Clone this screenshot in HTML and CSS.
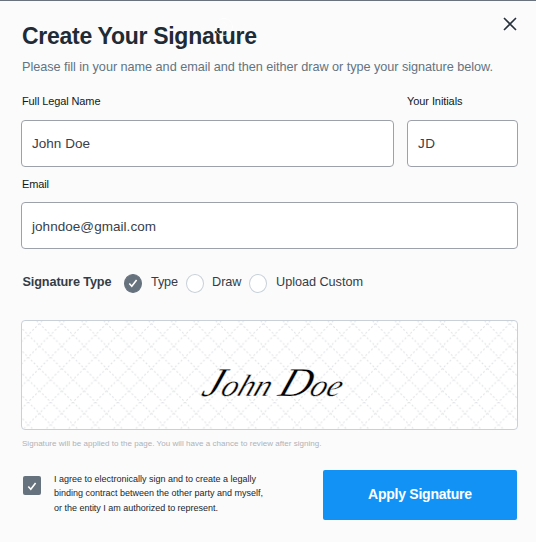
FILE: index.html
```html
<!DOCTYPE html>
<html lang="en">
<head>
<meta charset="utf-8">
<title>Create Your Signature</title>
<link rel="stylesheet" href="styles.css">
</head>
<body>
<main class="dialog">
  <header class="header">
    <h1 class="title"><svg class="t" viewBox="0 0 240 28"><text x="0" y="22" textLength="235">Create Your Signature</text></svg>
      <svg class="help" viewBox="0 0 20 20"><circle cx="10" cy="10" r="8.5"/><path d="M7.5 8a2.500 2.500 0 1 1 3.700 2.200c-.8.5-1.200.8-1.200 1.800M10 14v1"/></svg>
    </h1>
    <svg class="close" viewBox="0 0 14 14"><path d="M1 1l12 12M13 1L1 13"/></svg>
  </header>
  <p class="intro"><svg class="t" viewBox="0 0 480 20"><text x="0" y="14" textLength="471">Please fill in your name and email and then either draw or type your signature below.</text></svg></p>
  <div class="row">
    <label class="field name"><span class="label"><svg class="t" viewBox="0 0 100 15"><text x="0" y="10" textLength="78.500">Full Legal Name</text></svg></span>
      <span class="input"><svg class="t" viewBox="0 0 100 20"><text x="0" y="14" textLength="58">John Doe</text></svg></span></label>
    <label class="field initials"><span class="label"><svg class="t" viewBox="0 0 100 15"><text x="0" y="10" textLength="55.500">Your Initials</text></svg></span>
      <span class="input"><svg class="t" viewBox="0 0 90 20"><text x="0" y="14" textLength="17">JD</text></svg></span></label>
  </div>
  <label class="field email"><span class="label"><svg class="t" viewBox="0 0 100 15"><text x="0" y="11" textLength="27">Email</text></svg></span>
    <span class="input"><svg class="t" viewBox="0 0 200 20"><text x="0" y="15" textLength="124">johndoe@gmail.com</text></svg></span></label>
  <div class="types">
    <svg class="t legend" viewBox="0 0 102 20"><text x="0.500" y="14" textLength="89">Signature Type</text></svg>
    <span class="radio checked"><svg class="tick" viewBox="0 0 10 10"><path d="M1.300 5.500l2.500 2.700L8.600 2"/></svg></span>
    <svg class="t type" viewBox="0 0 35 20"><text x="0" y="14" textLength="27">Type</text></svg>
    <span class="radio"></span>
    <svg class="t draw" viewBox="0 0 37 20"><text x="0" y="14" textLength="29.500">Draw</text></svg>
    <span class="radio"></span>
    <svg class="t upload" viewBox="0 0 100 20"><text x="0" y="14" textLength="87">Upload Custom</text></svg>
  </div>
  <div class="pad">
    <svg class="canvas" viewBox="0 0 495 108">
      <defs><pattern id="lattice" x="6.200" y="-8.600" width="22.400" height="22.400" patternUnits="userSpaceOnUse"><path d="M0 0L22.400 22.400M22.400 0L0 22.400"/></pattern></defs>
      <rect width="495" height="108" fill="url(#lattice)"/>
      <text class="signature" transform="translate(178 75) skewX(-20)" x="0" y="0" textLength="139" lengthAdjust="spacingAndGlyphs"><tspan class="cap">J</tspan>ohn <tspan class="cap">D</tspan>oe</text>
    </svg>
  </div>
  <p class="note"><svg class="t" viewBox="0 0 320 12"><text x="0" y="9" textLength="299.500">Signature will be applied to the page. You will have a chance to review after signing.</text></svg></p>
  <footer class="footer">
    <span class="checkbox"><svg class="tick" viewBox="0 0 10 10"><path d="M1.300 5.500l2.500 2.700L8.600 2"/></svg></span>
    <svg class="t consent" viewBox="0 0 220 46"><text x="0" y="12" textLength="202">I agree to electronically sign and to create a legally</text><text x="0" y="26" textLength="209">binding contract between the other party and myself,</text><text x="0" y="41" textLength="164">or the entity I am authorized to represent.</text></svg>
    <button class="apply" type="button"><svg class="t" viewBox="0 0 104 20"><text x="0" y="14" textLength="104">Apply Signature</text></svg></button>
  </footer>
</main>
</body>
</html>
```
FILE: styles.css
```css
* { box-sizing: border-box; }
body { margin: 0; background: #fbfbfc; font-family: "Liberation Sans", Arial, sans-serif; color: #212b36; }
.dialog { height: 542px; border-top: 1px solid #69727d; padding: 21px 18px 0 21px; overflow: hidden; }
.t { display: block; overflow: visible; fill: currentColor; flex: none; }
.header { display: flex; justify-content: space-between; height: 37px; }
.title { position: relative; margin: 0 0 0 1px; font-size: 23px; font-weight: 700; color: #212b36; }
.title .t { width: 240px; height: 28px; }
.help { position: absolute; left: 192px; top: -5px; width: 20px; height: 20px; fill: none; stroke: #fff; stroke-width: 1; opacity: 0.75; }
.close { width: 14px; height: 14px; margin: -5px 1px 0 0; fill: none; stroke: #27313c; stroke-width: 1.6; }
.intro { margin: -2px 0 0 1px; height: 37px; padding-top: 0; font-size: 12.7px; color: #637381; }
.intro .t { width: 480px; height: 20px; }
.row { display: flex; gap: 13px; }
.field { display: block; }
.name { width: 373px; }
.initials { width: 111px; }
.label { display: block; height: 26px; padding-top: 1px; font-size: 11px; color: #111820; }
.label .t { width: 100px; height: 15px; margin-left: 1px; }
.initials .label .t { margin-left: 0; }
.input { display: flex; align-items: center; height: 47px; padding-left: 10px; background: #fff; border: 1px solid #9da2aa; border-radius: 4px; font-size: 13.5px; color: #3a4047; }
.name .t, .initials .t { width: 100px; }
.input .t { height: 20px; }
.initials .input .t { width: 90px; }
.email .input .t { width: 200px; }
.email { margin-top: 9px; }
.types { display: flex; align-items: center; height: 22px; margin: 23px 0 0 1px; font-size: 12.7px; color: #353c45; }
.types .t { height: 20px; margin-top: -2px; }
.legend { width: 102px; font-weight: 700; }
.type { width: 35px; margin-left: 9px; }
.draw { width: 37px; margin-left: 8px; }
.upload { width: 100px; margin-left: 9px; }
.radio { display: flex; align-items: center; justify-content: center; flex: none; width: 18px; height: 19px; border: 1px solid #c7d0d9; border-radius: 50%; background: #fff; }
.radio.checked { background: #66727e; border-color: #66727e; }
.types .tick, .checkbox .tick { width: 10px; height: 10px; fill: none; stroke: #fff; stroke-width: 1.6; }
.pad { width: 497px; height: 110px; margin-top: 26px; border: 1px solid #c9d0d8; border-radius: 4px; background: #fff; overflow: hidden; }
.canvas { display: block; width: 495px; height: 108px; }
.canvas path { stroke: #e2e3e6; stroke-width: 1.1; stroke-dasharray: 1.98 1.98; fill: none; }
.signature { font-family: "Liberation Serif", "Times New Roman", cursive; font-style: italic; font-size: 31px; fill: #000; stroke: #fff; stroke-width: 0.35px; }
.cap { font-size: 41px; }
.note { margin: 7px 0 0 1px; height: 12px; font-size: 8px; color: #aeb2b6; }
.note .t { width: 320px; height: 12px; }
.footer { display: flex; margin-top: 21px; }
.checkbox { display: flex; align-items: center; justify-content: center; flex: none; width: 18px; height: 19px; margin: 6px 0 0 2px; background: #66727e; border-radius: 2px; }
.consent { width: 220px; height: 46px; margin-left: 13px; font-size: 9px; color: #20262d; }
.apply { display: flex; align-items: center; justify-content: center; width: 194px; height: 50px; margin-left: 49px; padding: 0; border: 0; border-radius: 2px; background: #1292f5; color: #fff; font: 700 14px "Liberation Sans", Arial, sans-serif; }
.apply .t { width: 104px; height: 20px; }
```
